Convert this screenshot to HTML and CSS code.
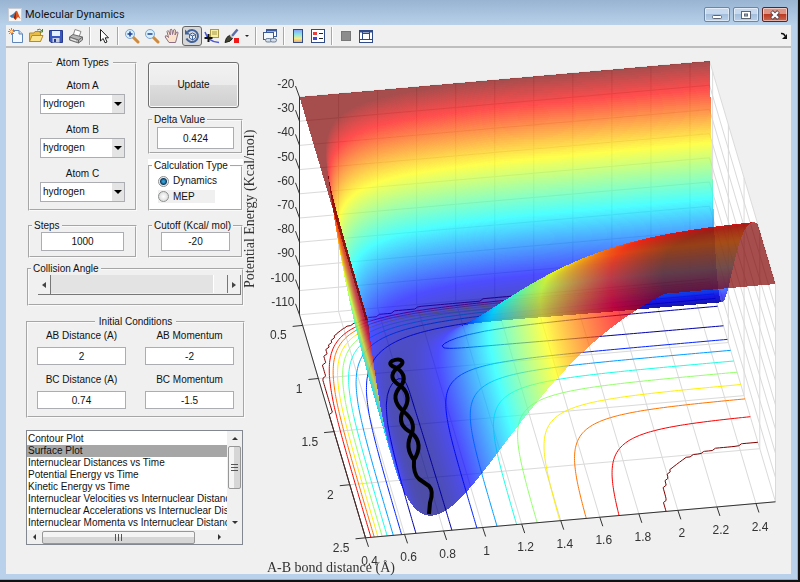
FILE: index.html
```html
<!DOCTYPE html>
<html lang="en">
<head>
  <meta charset="UTF-8" />
  <meta name="viewport" content="width=device-width, initial-scale=1.0" />
  <title>Molecular Dynamics</title>
  <link rel="stylesheet" href="styles.css">
</head>
<body>
  <div class="window">
    <header class="titlebar">
      <svg class="logo" viewBox="0 0 14 14" width="14" height="14">
        <rect x="0.5" y="0.5" width="13" height="13" fill="#f6f6f6" stroke="#c9ced6"/>
        <path d="M1.5 8 L5 6 L8 3 L6.5 9 L4 10 Z" fill="#3f7fb5"/>
        <path d="M5 9.5 L8 3 Q9 2 10 5 L12.5 11 L10 9 L7.5 12 Z" fill="#d9541e"/>
        <path d="M8 3 L7.5 12 L6 9.5 Z" fill="#7c1d12"/>
      </svg>
      <h1>Molecular Dynamics</h1>
      <div class="win-buttons">
        <button class="win-btn" aria-label="Minimize"><svg viewBox="0 0 12 10" width="12" height="10"><rect x="1.5" y="5.5" width="9" height="3" rx="1" fill="#fff" stroke="#5c6675"/></svg></button>
        <button class="win-btn" aria-label="Maximize"><svg viewBox="0 0 12 10" width="12" height="10"><rect x="1.5" y="1.5" width="9" height="7" fill="#fff" stroke="#5c6675"/><rect x="4.5" y="4" width="3" height="2" fill="#9db8d6" stroke="#5c6675"/></svg></button>
        <button class="win-btn close" aria-label="Close"><svg viewBox="0 0 12 10" width="12" height="10"><path d="M2.5 1.5 L9.5 8.5 M9.5 1.5 L2.5 8.5" stroke="#5b4a55" stroke-width="4"/><path d="M3 2 L9 8 M9 2 L3 8" stroke="#fff" stroke-width="2.2"/></svg></button>
      </div>
    </header>

    <nav class="toolbar">
      <button class="tool" aria-label="New"><svg viewBox="0 0 16 16"><path d="M4.5 2.5 H11 L14.5 6 V14.5 H4.5 Z" fill="#f4f8ff" stroke="#5f84b8"/><path d="M11 2.5 V6 H14.5" fill="#c7d8f0" stroke="#5f84b8"/><path d="M3.5 0 V7 M0 3.5 H7 M1 1 L6 6 M6 1 L1 6" stroke="#e8762c"/><circle cx="3.5" cy="3.5" r="1.3" fill="#ffe9a0"/></svg></button>
      <button class="tool" aria-label="Open"><svg viewBox="0 0 16 16"><path d="M1.5 13.5 V5 H6 L7 3.5 H12.5 V13.5 Z" fill="#e9bd4a" stroke="#b78a24"/><path d="M1.5 13.5 L4 7.5 H15 L12.5 13.5 Z" fill="#fbe38c" stroke="#b78a24"/><path d="M9 2 Q12 0 14 3 M14.5 1 V4 H11.5" fill="none" stroke="#4f7d3a"/></svg></button>
      <button class="tool" aria-label="Save"><svg viewBox="0 0 16 16"><path d="M1.5 2.5 H14.5 V14.5 H3 L1.5 13 Z" fill="#3a56c0" stroke="#263a8c"/><rect x="4" y="3" width="8" height="5" fill="#e6efff"/><rect x="4.5" y="10" width="7" height="4.5" fill="#c9cfe0"/><rect x="6" y="11" width="2" height="3" fill="#263a8c"/></svg></button>
      <button class="tool" aria-label="Print"><svg viewBox="0 0 16 16"><path d="M5 8 L7 1.5 L13 3.5 L11 9 Z" fill="#fff" stroke="#8a8a8a"/><path d="M1.5 9 L5 6.5 L14.5 9 V12 L10.5 15 L1.5 12 Z" fill="#b5b5b5" stroke="#6c6c6c"/><path d="M1.5 9 L10.5 12 L14.5 9 M10.5 12 V15" fill="none" stroke="#666"/><path d="M3 11 L8 12.8" stroke="#eee"/></svg></button>
      <span class="sep"></span>
      <button class="tool" aria-label="Edit plot"><svg viewBox="0 0 16 16"><path d="M4.5 1.5 V13 L7.2 10.5 L9 14.8 L11 14 L9.2 9.8 H12.5 Z" fill="#fff" stroke="#222"/></svg></button>
      <span class="sep"></span>
      <button class="tool" aria-label="Zoom in"><svg viewBox="0 0 16 16"><path d="M9 9 L14 14" stroke="#d08a3a" stroke-width="3" stroke-linecap="round"/><circle cx="6" cy="6" r="4.5" fill="#d8f0fb" stroke="#7fa6cf"/><path d="M6 3.5 V8.5 M3.5 6 H8.5" stroke="#1f3f93" stroke-width="1.5"/></svg></button>
      <button class="tool" aria-label="Zoom out"><svg viewBox="0 0 16 16"><path d="M9 9 L14 14" stroke="#d08a3a" stroke-width="3" stroke-linecap="round"/><circle cx="6" cy="6" r="4.5" fill="#d8f0fb" stroke="#7fa6cf"/><path d="M3.5 6 H8.5" stroke="#1f3f93" stroke-width="1.5"/></svg></button>
      <button class="tool" aria-label="Pan"><svg viewBox="0 0 16 16"><path d="M5 14.5 L1.2 9 Q1 7 3 8 L4.5 9.5 L3 3.5 Q3.5 2 4.8 3.2 L6.3 7 L6.2 1.8 Q7 .5 8 1.8 L8.5 6.5 L9.8 1.8 Q10.8 1 11.5 2.2 L11 7 L12.6 4 Q14 3.5 14 5 L12.5 11 L11.5 14.5 Z" fill="#fbe3cb" stroke="#8a6f86"/></svg></button>
      <button class="tool pressed" aria-label="Rotate 3D" aria-pressed="true"><svg viewBox="0 0 16 16"><path d="M3.5 4 A6 6 0 1 1 2.5 10.5" fill="none" stroke="#41639b" stroke-width="2"/><path d="M1 1.5 V6.5 H6 Z" fill="#41639b"/><path d="M5.5 6.5 L8.5 5 L11.5 6.5 V10 L8.5 12 L5.5 10 Z M5.5 6.5 L8.5 8 L11.5 6.5 M8.5 8 V12" fill="#e8eef8" stroke="#41639b"/></svg></button>
      <button class="tool" aria-label="Data cursor"><svg viewBox="0 0 16 16"><path d="M1 4 Q4 14 15 14.5" fill="none" stroke="#4b58d8" stroke-width="1.5"/><rect x="6.5" y="1.5" width="8" height="8" fill="#f6efa4" stroke="#a79a4c"/><path d="M8 4 H13 M8 6 H13" stroke="#a79a4c"/><path d="M4.5 6 V14 M.5 10 H8.5" stroke="#111" stroke-width="2"/></svg></button>
      <button class="tool" aria-label="Brush"><svg viewBox="0 0 16 16"><path d="M8 8 L13.5 1.5" stroke="#5b6ea8" stroke-width="2.5"/><path d="M1 14.5 Q1.5 9 6 7 L9 10 Q7 14 1 14.5 Z" fill="#443" stroke="#222"/><path d="M6 7 L9 10" stroke="#c9c9c9" stroke-width="1.5"/><rect x="10" y="10" width="5" height="5" fill="#f01818"/></svg></button>
      <button class="caret" aria-label="Brush colors"></button>
      <span class="sep"></span>
      <button class="tool" aria-label="Link plot"><svg viewBox="0 0 16 16"><rect x="4.5" y="1.5" width="10" height="7" fill="#fff" stroke="#3c5a9a"/><path d="M4 2.5 H15" stroke="#3c5a9a" stroke-width="2"/><rect x="1.5" y="4.5" width="10" height="7" fill="#f4f8ff" stroke="#3c5a9a"/><rect x="3.5" y="10.5" width="6" height="3.5" rx="1.7" fill="#d5dde8" stroke="#6b7f99"/><rect x="8.5" y="10.5" width="6" height="3.5" rx="1.7" fill="#d5dde8" stroke="#6b7f99"/></svg></button>
      <span class="sep"></span>
      <button class="tool" aria-label="Colorbar"><svg viewBox="0 0 16 16"><defs><linearGradient id="bar" x2="0" y2="1"><stop offset="0" stop-color="#8f9df5"/><stop offset=".35" stop-color="#86e2ec"/><stop offset=".7" stop-color="#f6eb8b"/><stop offset="1" stop-color="#f2a26c"/></linearGradient></defs><rect x="3.5" y="1.5" width="9" height="13" fill="url(#bar)" stroke="#2f4a87"/></svg></button>
      <button class="tool" aria-label="Legend"><svg viewBox="0 0 16 16"><rect x="1.5" y="1.5" width="13" height="13" fill="#fff" stroke="#2f4a87"/><rect x="3" y="4" width="4" height="3" fill="#e8403c"/><rect x="3" y="9" width="4" height="3" fill="#4444dd"/><path d="M9 5.5 H13 M9 10.5 H13" stroke="#222"/></svg></button>
      <span class="sep"></span>
      <button class="tool" aria-label="Hide plot tools"><svg viewBox="0 0 16 16"><rect x="3.5" y="3.5" width="9" height="9" fill="#8c8c8c" stroke="#777"/></svg></button>
      <button class="tool" aria-label="Show plot tools"><svg viewBox="0 0 16 16"><rect x="1.5" y="2.5" width="13" height="12" fill="#fff" stroke="#2f4a87"/><path d="M1 3.5 H15" stroke="#2f4a87" stroke-width="2"/><path d="M4.5 4 V12 M11.5 4 V12 M4 5.5 H12 M2 11.5 H14" stroke="#2f4a87"/></svg></button>
      <button class="dock" aria-label="Dock figure"><svg viewBox="0 0 8 8" width="8" height="8"><path d="M1 1.5 Q4 1 5 4" fill="none" stroke="#111" stroke-width="1.5"/><path d="M7 2 V7 H2 Z" fill="#111"/></svg></button>
    </nav>

    <main class="content">
      <form class="sidebar">
        <div class="columns">
          <fieldset class="panel atoms">
            <legend class="center">Atom Types</legend>
            <div class="atom">
              <label for="atomA">Atom A</label>
              <span class="dropdown"><select id="atomA"><option>hydrogen</option></select></span>
            </div>
            <div class="atom">
              <label for="atomB">Atom B</label>
              <span class="dropdown"><select id="atomB"><option>hydrogen</option></select></span>
            </div>
            <div class="atom">
              <label for="atomC">Atom C</label>
              <span class="dropdown"><select id="atomC"><option>hydrogen</option></select></span>
            </div>
          </fieldset>
          <div class="stack">
            <button type="button" class="update">Update</button>
            <fieldset class="panel delta">
              <legend>Delta Value</legend>
              <div class="inset"><input class="field" type="text" value="0.424" aria-label="Delta Value"></div>
            </fieldset>
            <fieldset class="panel calc">
              <legend>Calculation Type</legend>
              <label class="radio"><input type="radio" name="calc" checked>Dynamics</label>
              <label class="radio shaded"><input type="radio" name="calc">MEP</label>
            </fieldset>
          </div>
          <fieldset class="panel single">
            <legend>Steps</legend>
            <div class="inset"><input class="field" type="text" value="1000" aria-label="Steps"></div>
          </fieldset>
          <fieldset class="panel single">
            <legend>Cutoff (Kcal/ mol)</legend>
            <div class="inset"><input class="field" type="text" value="-20" aria-label="Cutoff"></div>
          </fieldset>
        </div>

        <fieldset class="panel angle">
          <legend>Collision Angle</legend>
          <div class="slider">
            <button type="button" class="step left" aria-label="Decrease"></button>
            <input type="range" min="0" max="180" value="180" aria-label="Collision Angle">
            <button type="button" class="step right" aria-label="Increase"></button>
          </div>
        </fieldset>

        <fieldset class="panel initial">
          <legend class="center">Initial Conditions</legend>
          <div class="pairs">
            <label>AB Distance (A)<input class="field" type="text" value="2"></label>
            <label>AB Momentum<input class="field" type="text" value="-2"></label>
            <label>BC Distance (A)<input class="field" type="text" value="0.74"></label>
            <label>BC Momentum<input class="field" type="text" value="-1.5"></label>
          </div>
        </fieldset>

        <div class="listbox">
          <select class="plots" size="8" aria-label="Plot type">
            <option>Contour Plot</option>
            <option selected>Surface Plot</option>
            <option>Internuclear Distances vs Time</option>
            <option>Potential Energy vs Time</option>
            <option>Kinetic Energy vs Time</option>
            <option>Internuclear Velocities vs Internuclear Distance</option>
            <option>Internuclear Accelerations vs Internuclear Distance</option>
            <option>Internuclear Momenta vs Internuclear Distance</option>
          </select>
          <div class="bar vertical"><i class="arrow up"></i><i class="thumb"></i><i class="arrow down"></i></div>
          <div class="bar horizontal"><i class="arrow prev"></i><i class="thumb"></i><i class="arrow next"></i></div>
        </div>
      </form>

      <figure class="plot">
        <canvas id="surface" width="546" height="526"></canvas>
        <svg class="axes" viewBox="245 48 546 526">
          <g id="ticks"></g>
          <path class="trajectory" d="M429 514 L430 503 Q434 491 429 486 L419 479 Q413 474 414 460 Q424 444 412 433 Q396 425 403 411 Q413 397 401 386 Q386 378 397 368 Q404 364 402 361 Q399 358 392 361 Q387 365 397 368 Q408 376 401 386 Q389 398 403 411 Q416 421 412 433 Q404 447 414 460"/>
          <text class="caption" x="267" y="572">A-B bond distance (Å)</text>
          <text class="caption" transform="translate(254 288) rotate(-90)">Potential Energy (Kcal/mol)</text>
        </svg>
      </figure>
    </main>
  </div>
  <script src="plot.js"></script>
</body>
</html>
```

FILE: styles.css
```css
body {
  margin: 0;
  background: #111;
  font-family: "Liberation Sans", Arial, sans-serif;
  font-size: 10px;
  line-height: 12px;
  color: #111;
}
button, input, select {
  font: inherit;
  color: inherit;
  margin: 0;
  box-sizing: border-box;
}
.window {
  margin: 0 2px 2px 0;
  border-right: 1px solid #35d6ee;
  border-bottom: 1px solid #35d6ee;
  background: #b9d1ea;
  padding: 0 6px 5px;
}

/* title bar */
.titlebar {
  height: 25px;
  margin: 0 -6px;
  padding: 4px 9px 0 8px;
  box-sizing: border-box;
  display: flex;
  align-items: center;
  background: linear-gradient(#98b4d2, #b9d1ea);
}
.titlebar h1 {
  margin: 0 0 0 3px;
  flex: 1;
  font: 11px/16px Roboto, "Open Sans", sans-serif;
  color: #111;
}
.win-buttons {
  display: flex;
  gap: 3px;
}
.win-btn {
  width: 26px;
  height: 15px;
  padding: 0;
  display: flex;
  align-items: center;
  justify-content: center;
  border: 1px solid #6c86a6;
  border-radius: 2px;
  background: linear-gradient(#c6d9ee 50%, #a4bedb 50%, #b9d1ea);
  box-shadow: inset 0 0 0 1px rgba(255,255,255,0.5);
}
.win-btn.close {
  border-color: #5c2323;
  background: linear-gradient(#dd9485 50%, #bb3b22 50%, #cc6750);
}

/* toolbar */
.toolbar {
  height: 23px;
  box-sizing: border-box;
  display: flex;
  align-items: center;
  background: #f0f0f0;
  border-bottom: 2px solid #bdbdbd;
}
.tool {
  width: 20px;
  height: 20px;
  padding: 1px;
  border: 1px solid transparent;
  background: none;
}
.tool svg {
  display: block;
  width: 16px;
  height: 16px;
}
.tool.pressed {
  border-color: #666;
  border-radius: 3px;
  background: #d8d8d8;
}
.sep {
  width: 2px;
  height: 18px;
  margin: 0 3px;
  background: linear-gradient(to right, #a8a8a8 50%, #fff 50%);
}
.caret {
  width: 10px;
  height: 20px;
  padding: 0;
  border: none;
  background: none;
}
.caret::after {
  content: "";
  display: block;
  margin: 0 auto;
  width: 0;
  border: 2px solid transparent;
  border-top-color: #222;
  border-bottom: none;
}
.dock {
  margin-left: auto;
  margin-right: 3px;
  padding: 0;
  border: none;
  background: none;
}
.dock svg {
  display: block;
}

/* content */
.content {
  display: flex;
  background: #f0f0f0;
}
.sidebar {
  width: 219px;
  flex: none;
  margin-left: 20px;
  padding-top: 9px;
}
.columns {
  display: grid;
  grid-template-columns: 109px 95px;
  gap: 9px 11px;
  margin: 0 2px;
}
.panel {
  min-width: 0;
  margin: 0;
  padding: 0;
  box-sizing: border-box;
  border: 2px groove #fafafa;
}
.panel legend {
  margin-left: 2px;
  padding: 0 2px;
  white-space: nowrap;
}
.panel legend.center {
  margin: 0 auto;
  padding: 0 4px;
}
.inset {
  padding: 0 11px;
}
.atoms {
  height: 154px;
  padding: 11px 10px 0;
}
.atom {
  display: flex;
  flex-direction: column;
  gap: 2px;
  margin-bottom: 10px;
}
.atom label {
  text-align: center;
}
.dropdown {
  position: relative;
  display: block;
}
.dropdown select {
  display: block;
  appearance: none;
  width: 100%;
  height: 20px;
  padding: 0 2px;
  border: 1px solid #abadb3;
  border-radius: 0;
  background: linear-gradient(to left, #e4e4e4 12px, #fff 12px);
}
.dropdown::after {
  content: "";
  position: absolute;
  right: 3px;
  top: 8px;
  border: 4px solid transparent;
  border-top-color: #000;
  border-bottom: none;
  pointer-events: none;
}
.stack {
  display: flex;
  flex-direction: column;
  gap: 6px;
  padding-top: 5px;
}
.update {
  height: 46px;
  width: 91px;
  border: 1px solid #707070;
  border-radius: 3px;
  background: linear-gradient(#f2f2f2, #ebebeb 50%, #dddddd 50%, #cfcfcf);
  box-shadow: inset 0 0 0 1px #fafafa;
}
.field {
  display: block;
  width: 100%;
  height: 19px;
  padding: 0;
  border: 1px solid #abadb3;
  background: #fff;
  text-align: center;
}
.delta {
  height: 40px;
}
.delta .inset {
  padding: 1px 7px 0;
}
.delta .field {
  height: 22px;
}
.calc {
  height: 51px;
  background: #fff;
  box-shadow: 0 -6px #fff;
}
.radio {
  display: flex;
  align-items: center;
  gap: 4px;
  height: 18px;
  margin-left: 8px;
}
.radio.shaded {
  width: 57px;
  height: 13px;
  background: #f0f0f0;
}
.radio input {
  appearance: none;
  width: 11px;
  height: 11px;
  border: 1px solid #8e8f8f;
  border-radius: 50%;
  background: radial-gradient(#fff, #d0d0d0);
}
.radio input:checked {
  background: radial-gradient(circle, #2f9fd8 0 1px, #123a5c 3px, #e8eef2 4px);
}
.single {
  height: 38px;
}
.angle {
  height: 43px;
  margin: 5px 1px 0;
}
.slider {
  display: flex;
  height: 19px;
  margin: 0 1px 0 9px;
  border-bottom: 1px solid #777;
}
.step {
  width: 13px;
  padding: 0;
  border: none;
  border-right: 1px solid #777;
  background: #f0f0f0;
  display: flex;
  align-items: center;
  justify-content: center;
}
.step::after {
  content: "";
  border: 3px solid transparent;
}
.step.left::after {
  border-right: 4px solid #444;
  border-left: none;
}
.step.right::after {
  border-left: 4px solid #444;
  border-right: none;
}
.slider input {
  appearance: none;
  flex: 1;
  min-width: 0;
  height: 18px;
  background: #e3e3e3;
}
.slider input::-webkit-slider-thumb {
  appearance: none;
  box-sizing: border-box;
  width: 15px;
  height: 18px;
  background: #f0f0f0;
  border-left: 1px solid #fff;
  border-right: 1px solid #777;
}
.initial {
  height: 102px;
  margin-top: 10px;
}
.pairs {
  display: grid;
  grid-template-columns: 89px 89px;
  justify-content: center;
  gap: 9px 19px;
  padding-top: 2px;
  text-align: center;
}
.pairs .field {
  margin-top: 5px;
  height: 18px;
}

/* plot list */
.listbox {
  display: grid;
  grid-template-columns: 1fr 15px;
  grid-template-rows: 99px 14px;
  width: 217px;
  height: 115px;
  box-sizing: border-box;
  margin-top: 12px;
  border: 1px solid #828790;
}
.plots {
  width: 100%;
  height: 99px;
  padding: 2px 0 0;
  border: none;
  border-radius: 0;
  background: #fff;
  overflow: hidden;
  outline: none;
}
.plots option {
  min-height: 12px;
  padding: 0 1px;
}
.plots option:checked {
  color: #111;
  background: #a6a6a6 linear-gradient(#a6a6a6, #a6a6a6);
}
.bar {
  display: flex;
  align-items: center;
  background: #f0f0f0;
}
.bar.vertical {
  flex-direction: column;
  padding: 6px 0;
}
.bar.horizontal {
  padding: 0 6px;
}
.thumb {
  box-sizing: border-box;
  border: 1px solid #979797;
  border-radius: 2px;
  display: flex;
  align-items: center;
  justify-content: center;
}
.thumb::after {
  content: "";
  width: 7px;
  height: 7px;
}
.vertical .thumb {
  width: 13px;
  height: 43px;
  margin-top: 6px;
  background: linear-gradient(to right, #f4f4f4 50%, #d6d6d6 50%);
}
.vertical .thumb::after {
  background: repeating-linear-gradient(#555 0 1px, transparent 1px 3px);
}
.horizontal .thumb {
  width: 153px;
  height: 13px;
  margin-left: 6px;
  background: linear-gradient(#f4f4f4 50%, #d6d6d6 50%);
}
.horizontal .thumb::after {
  background: repeating-linear-gradient(to right, #555 0 1px, transparent 1px 3px);
}
.arrow {
  border: 3px solid transparent;
}
.arrow.up {
  border-top: none;
  border-bottom-color: #333;
}
.arrow.down {
  margin-top: auto;
  border-bottom: none;
  border-top-color: #333;
}
.arrow.prev {
  border-left: none;
  border-right-color: #333;
}
.arrow.next {
  margin-left: 23px;
  border-right: none;
  border-left-color: #333;
}

/* plot */
.plot {
  position: relative;
  flex: 1;
  min-width: 0;
  margin: 0;
}
.plot canvas {
  display: block;
  width: 100%;
}
.axes {
  position: absolute;
  left: 0;
  top: 0;
  width: 100%;
  height: 100%;
  overflow: visible;
}
.axes text {
  font-size: 12px;
  fill: #333;
}
.axes .caption {
  font-family: "Liberation Serif", "Times New Roman", serif;
  font-size: 14px;
}
.axes line {
  stroke: #333;
  stroke-width: 1;
}
.trajectory {
  fill: none;
  stroke: #000;
  stroke-width: 4;
  stroke-linejoin: round;
}
```

FILE: plot.js
```js
// LEPS potential energy surface for collinear H + H2
const D = 103.3, BETA = 1.942, RE = 0.742, SATO = 0.19;
const MIN = 0.4, SPAN = 2.1;
const CUTOFF = -20, VMIN = -103.3;

function pair(r) {
  const e = Math.exp(-BETA * (r - RE));
  const e1 = D * (e * e - 2 * e);
  const e3 = D / 2 * (e * e + 2 * e) * (1 - SATO) / (1 + SATO);
  return [(e1 + e3) / 2, (e1 - e3) / 2];
}

function energy(a, b) {
  const rab = MIN + SPAN * a;
  const rbc = MIN + SPAN * b;
  const [q1, j1] = pair(rab);
  const [q2, j2] = pair(rbc);
  const [q3, j3] = pair(rab + rbc);
  const v = q1 + q2 + q3 - Math.sqrt(((j1 - j2) ** 2 + (j2 - j3) ** 2 + (j1 - j3) ** 2) / 2);
  return Math.min(v, CUTOFF);
}

function jet(v) {
  const t = (v - VMIN) / (CUTOFF - VMIN);
  const ch = c => 255 * Math.max(0, Math.min(1, 1.5 - Math.abs(4 * t - c)));
  return [ch(3), ch(2), ch(1)];
}

// a, b run 0..1 along the two distances, z is the energy
const OX = 54.5, OY = 49, AX = 410, AY = -36, BX = 66, BY = 223, ZS = 2.42;
function project(a, b, z) {
  return [OX + AX * a + BX * b, OY + AY * a + BY * b + ZS * (CUTOFF - z)];
}

const canvas = document.getElementById('surface');
const ctx = canvas.getContext('2d');

function face(points) {
  ctx.beginPath();
  points.forEach(p => ctx.lineTo(...project(...p)));
  ctx.closePath();
  ctx.fill();
}

function line(p, q) {
  ctx.beginPath();
  ctx.moveTo(...project(...p));
  ctx.lineTo(...project(...q));
  ctx.stroke();
}

function drawBox() {
  ctx.fillStyle = '#fff';
  face([[0, 0, -110], [1, 0, -110], [1, 1, -110], [0, 1, -110]]);
  face([[0, 0, -20], [1, 0, -20], [1, 0, -110], [0, 0, -110]]);
  face([[1, 0, -20], [1, 1, -20], [1, 1, -110], [1, 0, -110]]);
  ctx.strokeStyle = '#dadada';
  for (let r = 0.4; r < 2.45; r += 0.2) {
    const a = (r - MIN) / SPAN;
    line([a, 0, -110], [a, 1, -110]);
    line([a, 0, -20], [a, 0, -110]);
  }
  for (let r = 0.5; r < 2.55; r += 0.5) {
    const b = (r - MIN) / SPAN;
    line([0, b, -110], [1, b, -110]);
    line([1, b, -20], [1, b, -110]);
  }
  for (let z = -20; z >= -110; z -= 10) {
    line([0, 0, z], [1, 0, z]);
    line([1, 0, z], [1, 1, z]);
  }
}

function drawContour(level, n) {
  const [r, g, b] = jet(level);
  ctx.strokeStyle = `rgb(${r}, ${g}, ${b})`;
  ctx.beginPath();
  for (let i = 0; i < n; i++) {
    for (let j = 0; j < n; j++) {
      const c = [[i, j], [i + 1, j], [i + 1, j + 1], [i, j + 1]].map(([x, y]) => [x / n, y / n, energy(x / n, y / n)]);
      const cut = [];
      for (let k = 0; k < 4; k++) {
        const p = c[k], q = c[(k + 1) % 4];
        if ((p[2] < level) !== (q[2] < level)) {
          const t = (level - p[2]) / (q[2] - p[2]);
          cut.push(project(p[0] + t * (q[0] - p[0]), p[1] + t * (q[1] - p[1]), -110));
        }
      }
      for (let k = 0; k + 1 < cut.length; k += 2) {
        ctx.moveTo(...cut[k]);
        ctx.lineTo(...cut[k + 1]);
      }
    }
  }
  ctx.stroke();
}

// walk every pixel column from back to front and blend the surface in
function drawSurface() {
  const w = canvas.width, h = canvas.height;
  const img = ctx.getImageData(0, 0, w, h);
  const d = img.data;
  const steps = 1600, alpha = 0.7;
  for (let x = 0; x < w; x++) {
    let prev = null;
    for (let s = 0; s <= steps; s++) {
      const b = s / steps;
      const a = (x + 0.5 - OX - BX * b) / AX;
      if (a < 0 || a > 1) {
        prev = null;
        continue;
      }
      const v = energy(a, b);
      const y = project(a, b, v)[1];
      if (prev !== null) {
        const from = Math.ceil(Math.min(prev, y) - 0.5);
        const to = Math.ceil(Math.max(prev, y) - 0.5);
        const rgb = jet(v);
        for (let row = from; row < to; row++) {
          const i = (row * w + x) * 4;
          for (let k = 0; k < 3; k++) {
            d[i + k] = rgb[k] * alpha + d[i + k] * (1 - alpha);
          }
          d[i + 3] = 255;
        }
      }
      prev = y;
    }
  }
  ctx.putImageData(img, 0, 0);
}

const NS = 'http://www.w3.org/2000/svg';
const ticks = document.getElementById('ticks');

function addLine(x1, y1, x2, y2) {
  const el = document.createElementNS(NS, 'line');
  Object.entries({ x1, y1, x2, y2 }).forEach(([k, v]) => el.setAttribute(k, v));
  ticks.appendChild(el);
}

function addText(x, y, anchor, text) {
  const el = document.createElementNS(NS, 'text');
  el.setAttribute('x', x);
  el.setAttribute('y', y);
  el.setAttribute('text-anchor', anchor);
  el.textContent = text;
  ticks.appendChild(el);
}

function drawAxes() {
  const at = (a, b, z) => {
    const [x, y] = project(a, b, z);
    return [x + 245, y + 48];
  };
  addLine(...at(0, 0, -20), ...at(0, 0, -110));
  addLine(...at(0, 0, -110), ...at(0, 1, -110));
  addLine(...at(0, 1, -110), ...at(1, 1, -110));
  for (let z = -20; z >= -110; z -= 10) {
    const [x, y] = at(0, 0, z);
    addLine(x, y, x - 4, y - 11);
    addText(x - 5, y - 9, 'end', z);
  }
  for (let i = 0; i <= 10; i++) {
    const r = 0.4 + 0.2 * i;
    const [x, y] = at((r - MIN) / SPAN, 1, -110);
    addLine(x, y, x + 3, y + 9);
    addText(x + 4, y + 27, 'middle', +r.toFixed(1));
  }
  for (let r = 0.5; r <= 2.5; r += 0.5) {
    const [x, y] = at(0, (r - MIN) / SPAN, -110);
    addLine(x, y, x - 10, y + 1);
    addText(x - 16, y + 14, 'end', r);
  }
}

drawBox();
for (let level = -100; level <= -30; level += 10) {
  drawContour(level, 105);
}
drawContour(CUTOFF - 0.01, 105);
drawSurface();
drawAxes();
```
